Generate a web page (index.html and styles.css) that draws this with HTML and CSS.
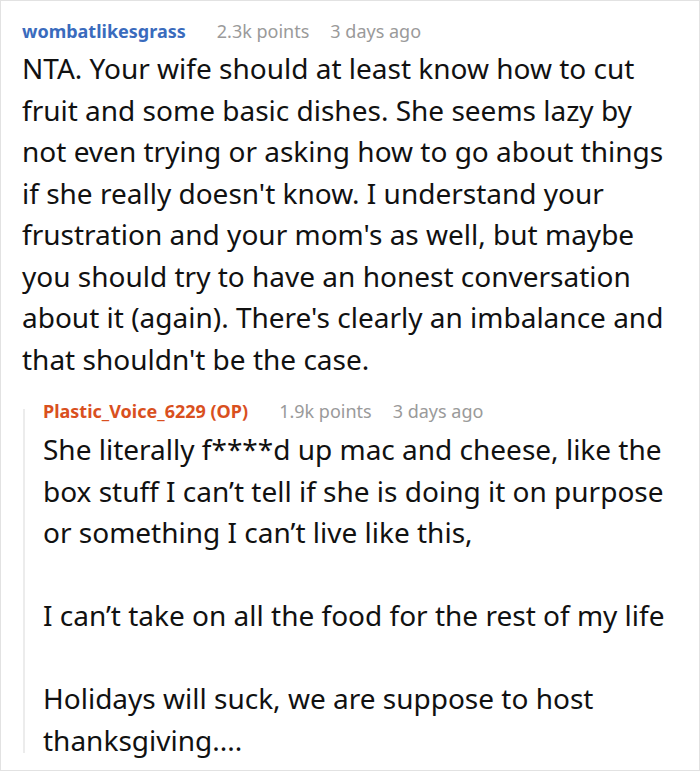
FILE: index.html
```html
<!DOCTYPE html>
<html>
<head>
<meta charset="utf-8">
<link rel="stylesheet" href="styles.css">
</head>
<body>
<div class="card">
  <div class="comment">
    <div class="meta">
      <span class="user">wombatlikesgrass</span>
      <span class="info">2.3k points</span>
      <span class="info">3 days ago</span>
    </div>
    <div class="text">
      <p>NTA. Your wife should at least know how to cut fruit and some basic dishes. She seems lazy by not even trying or asking how to go about things if she really doesn't know. I understand your frustration and your mom's as well, but maybe you should try to have an honest conversation about it (again). There's clearly an imbalance and that shouldn't be the case.</p>
    </div>
    <div class="reply">
      <div class="meta">
        <span class="user op">Plastic_Voice_6229 (OP)</span>
        <span class="info">1.9k points</span>
        <span class="info">3 days ago</span>
      </div>
      <div class="text">
        <p>She literally f****d up mac and cheese, like the box stuff I can’t tell if she is doing it on purpose or something I can’t live like this,</p>
        <p>I can’t take on all the food for the rest of my life</p>
        <p>Holidays will suck, we are suppose to host thanksgiving....</p>
      </div>
    </div>
  </div>
</div>
</body>
</html>
```

FILE: styles.css
```css
html, body {
  margin: 0;
  padding: 0;
  background: #fff;
}
body {
  font-family: "Noto Sans", "Open Sans", sans-serif;
  color: #111;
}
.card {
  width: 700px;
  height: 771px;
  box-sizing: border-box;
  border: 1px solid #e2e2e2;
  overflow: hidden;
}
.comment {
  padding: 18px 28px 0 21px;
}
.meta {
  display: flex;
  gap: 21px;
  align-items: baseline;
  font-size: 18px;
  line-height: 24px;
}
.user {
  font-weight: 700;
  color: #3a6bbd;
  margin-right: 10px;
}
.user.op {
  color: #d9501e;
}
.info {
  color: #9a9a9a;
}
.text {
  font-size: 28px;
  line-height: 41.5px;
}
.text p {
  margin: 0;
}
.text p + p {
  margin-top: 41.5px;
}
.comment > .text {
  margin-top: 5px;
}
.reply {
  position: relative;
  margin-top: 19px;
  padding-left: 21px;
}
.reply::before {
  content: "";
  position: absolute;
  left: 1px;
  top: 10px;
  bottom: 8px;
  width: 2px;
  background: #ececec;
}
.reply .text {
  margin-top: 6px;
}
```
